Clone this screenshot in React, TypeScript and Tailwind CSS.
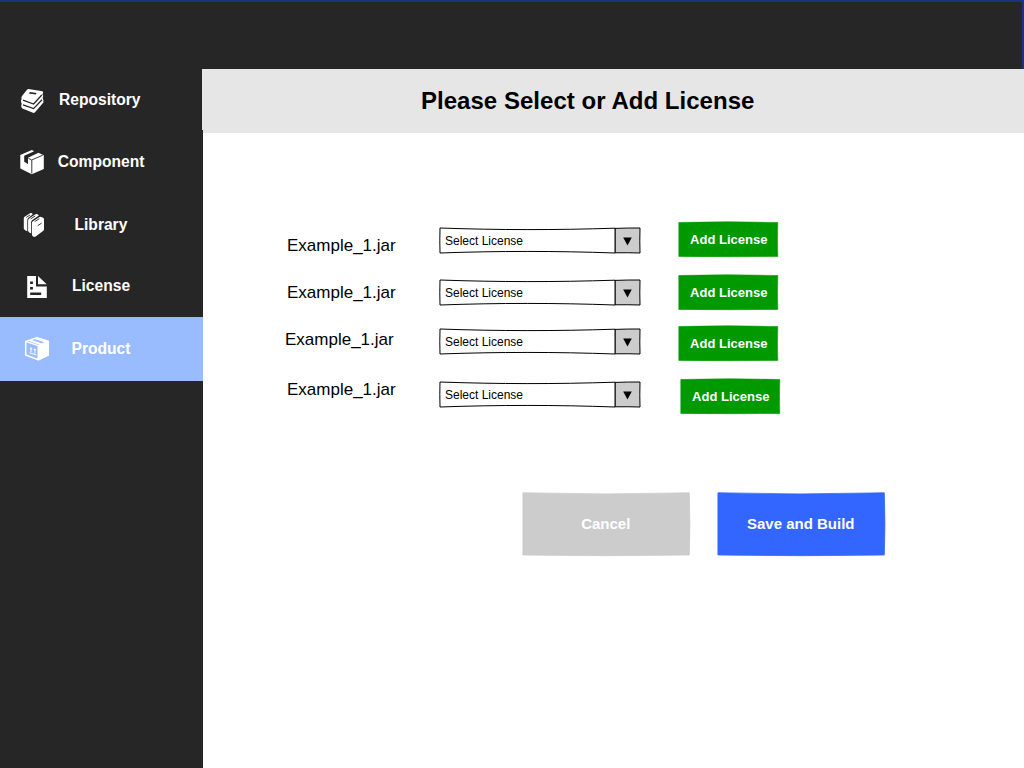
import type { ReactNode } from "react";

const RepositoryIcon = () => (
  <svg width="50" height="40" viewBox="0 0 50 40" className="shrink-0">
    <path
      fill="#fff"
      d="M18.5 9 L32.5 11.2 Q33.7 11.6 33 13 L32.4 14.4 L33.3 16 L32.6 18 L33.4 20 V22.6 L25 32.3 Q24.2 33.1 23 32.8 L12.4 28.6 Q11.2 27.8 11.2 25.5 L11.8 23.7 Q10.9 22.6 11 20.8 L11.6 19 Q11 17.5 12 16 L17 9.7 Q17.6 9 18.5 9Z"
    />
    <path fill="none" stroke="#262626" strokeWidth="1.3" d="M13 20.2 L23.6 24 L31.8 15 M13 24.8 L23.6 28.6 L32 19.8" />
    <path fill="#262626" d="M20 12.1 L26.6 13 L25.8 14.6 L18.8 13.6Z" />
  </svg>
);

const ComponentIcon = () => (
  <svg width="50" height="40" viewBox="0 0 50 40" className="shrink-0">
    <path fill="#fff" d="M10.3 13 L12 12.3 L21.8 8 L24.2 9.2 L14.2 13.8 V19.8 L18 21.9 V15.7 L28.4 10.8 L33.8 13.2 V27 L21.8 32.3 L10.3 26.6Z" />
    <path fill="none" stroke="#262626" strokeWidth=".9" d="M18.4 16.3 L21.8 18 V31.5 M22 17.8 L32.8 13.2" />
  </svg>
);

const LibraryIcon = () => (
  <svg width="50" height="40" viewBox="0 0 50 40" className="shrink-0">
    <path fill="#fff" d="M13.8 14.2 Q14 13 15 12.6 L20 9.2 Q21 8.7 22 9.2 L22.8 10.2 L17.9 14.2 Q17.3 15 17.3 16.5 V27.2 Q14.7 26.7 13.8 24.8Z" />
    <path fill="#fff" d="M18.1 16.5 Q18.2 15.2 19.2 14.5 L25.5 10.2 Q26.6 9.7 27.7 10.3 L28.9 11.6 L22 16.2 Q21.1 17 21.1 18.5 V29.2 Q18.8 28.8 18.1 27Z" />
    <path fill="#fff" d="M21.9 19.2 Q21.9 17.9 22.9 17.2 L29.5 13 Q30.4 12.5 31.4 12.9 L33.4 13.9 Q34 14.3 34 15.4 V25.2 Q34 26.2 33 27 L26 32.2 Q24.5 33.4 22.7 32.3 Q21.9 31.6 21.9 30Z" />
    <path fill="none" stroke="#262626" strokeWidth=".9" d="M16.3 13.4 L20 11 M20.7 14.9 L25.2 12 M24.7 17.5 L29.4 14.7 M27.8 21.6 L31.6 19.2" />
  </svg>
);

const LicenseIcon = () => (
  <svg width="50" height="40" viewBox="0 0 50 40" className="shrink-0">
    <path fill="#fff" d="M17.2 10 H26 V20.5 H36.8 V32 H17.2Z M28 10 L36.7 18.2 H28Z" />
    <path fill="#262626" d="M20.1 15.4 H22.9 V18 H20.1Z M20.1 20.9 H22.9 V23.6 H20.1Z M20.2 26.6 H31.2 V29 H20.2Z" />
  </svg>
);

const ProductIcon = () => (
  <svg width="50" height="40" viewBox="0 0 50 40" className="shrink-0">
    <path fill="none" stroke="#fff" strokeWidth="1.5" strokeLinejoin="round" d="M15.7 13.4 L27 9.7 L38.3 13.3 V27 L28.3 31.8 L15.7 27Z M15.7 13.4 L28.3 17.6 V31.8 M28.3 17.6 L38.3 13.3" />
    <path fill="#fff" d="M28.3 17.6 L39 13.3 V27.2 L28.3 32.4Z M18.3 12.8 L21 11.8 L32.8 15.7 L30 16.9Z M24.5 11 L27 10.2 L37.5 13.6 L34.8 14.6Z" />
    <path fill="none" stroke="#fff" strokeWidth="1" d="M21 20 V24.2 M24.8 21 V25.5 M19.6 24.8 L26.4 27 M20 21 L21 19.7 L22 21.3 M23.8 22 L24.8 20.7 L25.8 22.5" />
  </svg>
);

type NavItem = { label: string; icon: ReactNode; item: string; text: string };

const navItems: NavItem[] = [
  { label: "Repository", icon: <RepositoryIcon />, item: "h-[62px] pt-[11px]", text: "ml-[-1px]" },
  { label: "Component", icon: <ComponentIcon />, item: "h-[62px] pt-[11px]", text: "ml-[-2.25px]" },
  { label: "Library", icon: <LibraryIcon />, item: "h-[62px] pt-[11px]", text: "ml-[14.5px] pt-px" },
  { label: "License", icon: <LicenseIcon />, item: "h-[62px] pt-[11px]", text: "ml-[12px]" },
  { label: "Product", icon: <ProductIcon />, item: "h-16 pt-[11px] bg-[#99bbff]", text: "ml-[11.5px] pt-px" },
];

const labelOffsets = ["", "mt-[27px]", "mt-[27px] -ml-0.5", "mt-[30px]"];
const selectOffsets = ["", "mt-[24px]", "mt-[21px]", "mt-[25px]"];
const buttonOffsets = ["", "mt-[15px]", "mt-[13px]", "mt-[15px] ml-0.5"];

const LicenseSelect = ({ className }: { className: string }) => (
  <div className={`grid h-7 w-[202px] ${className}`}>
    <svg width="202" height="28" viewBox="0 0 202 28" className="col-start-1 row-start-1">
      <path d="M176 1.4 Q189 .9 201 1 Q200.6 14 201 26 Q189 25.6 176 25.8Z" fill="#ccc" stroke="#000" strokeWidth="1" />
      <path d="M1 1 C60 3.1 116 3.1 176 1.2 V26 C116 23.9 60 23.9 1 26 Q.6 14 1 1Z" fill="#fff" stroke="#000" strokeWidth="1" />
      <path d="M184.2 10.6 H192.8 L188.5 18.4Z" fill="#000" />
    </svg>
    <span className="col-start-1 row-start-1 pt-[6px] pl-[6px] text-[12px] leading-4 text-black">Select License</span>
  </div>
);

const AddButton = ({ className }: { className: string }) => (
  <button className={`grid h-[38px] w-[102px] ${className}`}>
    <svg width="102" height="38" viewBox="0 0 102 38" className="col-start-1 row-start-1">
      <path d="M.8 1.5 Q50 .1 99.8 1.5 Q99.2 18 99.8 35.4 Q50 36 .8 35.4Z" fill="#009900" stroke="#009900" strokeWidth=".6" strokeLinejoin="round" />
    </svg>
    <span className="col-start-1 row-start-1 pt-[11px] pr-[0.5px] text-[13px] leading-4 font-bold text-white">Add License</span>
  </button>
);

const ActionButton = ({ label, color }: { label: string; color: string }) => (
  <button className="grid h-[66px] w-[170px]">
    <svg width="170" height="66" viewBox="0 0 170 66" className={`col-start-1 row-start-1 ${color}`}>
      <path d="M.9 .8 Q84 3 167.3 .8 Q168.5 32 167.3 63 Q84 64.4 .9 63Z" fill="currentColor" stroke="currentColor" strokeWidth=".8" strokeLinejoin="round" />
    </svg>
    <span className="col-start-1 row-start-1 pt-[23px] pr-[2.5px] text-[15px] leading-[18px] font-bold text-white">{label}</span>
  </button>
);

export default function App() {
  return (
    <div className="flex h-[768px] w-[1024px] flex-col overflow-hidden bg-white font-['Liberation_Sans',Arial,sans-serif]">
      <div className="h-[69px] shrink-0 border-t-2 border-r-2 border-[#1a3380] bg-[#262626]" />
      <div className="flex flex-1">
        <nav className="w-[203px] shrink-0 bg-[#262626]">
          {navItems.map((n) => (
            <div key={n.label} className={`flex items-start pl-[10px] ${n.item}`}>
              {n.icon}
              <span className={`mt-[10px] text-[15.6px] leading-5 font-bold text-white ${n.text}`}>{n.label}</span>
            </div>
          ))}
        </nav>
        <main className="flex-1">
          <header className="-ml-px h-16 bg-[#e6e6e6] pt-[17px] pl-[219px] [clip-path:polygon(0_0,100%_0,100%_100%,1px_100%,1px_61px,0_61px)]">
            <h1 className="text-[24px] leading-[30px] font-bold tracking-[0.03px] text-black">Please Select or Add License</h1>
          </header>
          <div className="flex pt-[88px] pl-[84px]">
            <div className="w-[152px] pt-[15px]">
              {labelOffsets.map((o, i) => (
                <div key={i} className={`text-[17px] leading-5 text-black ${o}`}>Example_1.jar</div>
              ))}
            </div>
            <div className="w-[239px] pt-[6px]">
              {selectOffsets.map((o, i) => (
                <LicenseSelect key={i} className={o} />
              ))}
            </div>
            <div>
              {buttonOffsets.map((o, i) => (
                <AddButton key={i} className={o} />
              ))}
            </div>
          </div>
          <div className="flex gap-[25px] pt-[76px] pl-[319px]">
            <ActionButton label="Cancel" color="text-[#cccccc]" />
            <ActionButton label="Save and Build" color="text-[#3366ff]" />
          </div>
        </main>
      </div>
    </div>
  );
}
